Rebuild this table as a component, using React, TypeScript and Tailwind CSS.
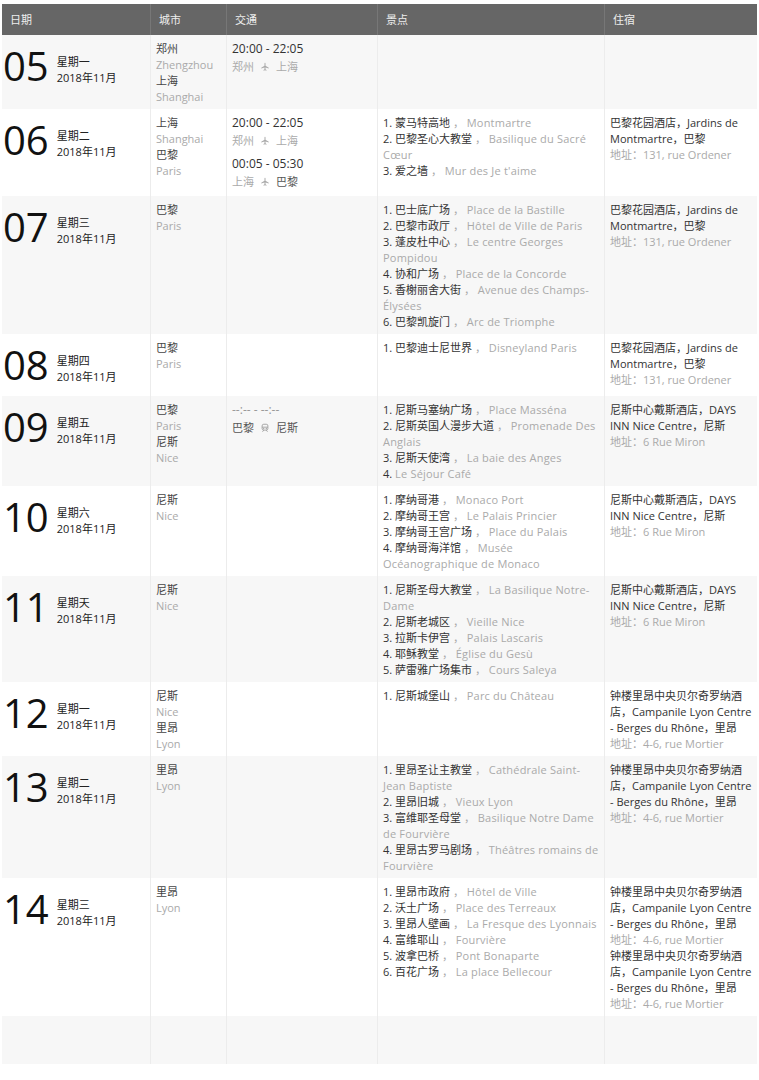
import React from "react";

type Trip = {
  time: string;
  from: string;
  to: string;
  mode: "plane" | "train";
  fromDark?: boolean;
  toDark?: boolean;
  timeGray?: boolean;
};

type Spot = { zh?: string; fr: string };

type Day = {
  day: string;
  week: string;
  cities: { zh: string; en: string }[];
  trips: Trip[];
  spots: Spot[];
  hotels: { name: string; addr: string }[];
};

const parisHotel = { name: "巴黎花园酒店，Jardins de Montmartre，巴黎", addr: "地址：131, rue Ordener" };
const niceHotel = { name: "尼斯中心戴斯酒店，DAYS INN Nice Centre，尼斯", addr: "地址：6 Rue Miron" };
const lyonHotel = {
  name: "钟楼里昂中央贝尔奇罗纳酒店，Campanile Lyon Centre - Berges du Rhône，里昂",
  addr: "地址：4-6, rue Mortier",
};

const days: Day[] = [
  {
    day: "05",
    week: "星期一",
    cities: [
      { zh: "郑州", en: "Zhengzhou" },
      { zh: "上海", en: "Shanghai" },
    ],
    trips: [{ time: "20:00 - 22:05", from: "郑州", to: "上海", mode: "plane" }],
    spots: [],
    hotels: [],
  },
  {
    day: "06",
    week: "星期二",
    cities: [
      { zh: "上海", en: "Shanghai" },
      { zh: "巴黎", en: "Paris" },
    ],
    trips: [
      { time: "20:00 - 22:05", from: "郑州", to: "上海", mode: "plane" },
      { time: "00:05 - 05:30", from: "上海", to: "巴黎", mode: "plane", toDark: true },
    ],
    spots: [
      { zh: "蒙马特高地", fr: "Montmartre" },
      { zh: "巴黎圣心大教堂", fr: "Basilique du Sacré Cœur" },
      { zh: "爱之墙", fr: "Mur des Je t'aime" },
    ],
    hotels: [parisHotel],
  },
  {
    day: "07",
    week: "星期三",
    cities: [{ zh: "巴黎", en: "Paris" }],
    trips: [],
    spots: [
      { zh: "巴士底广场", fr: "Place de la Bastille" },
      { zh: "巴黎市政厅", fr: "Hôtel de Ville de Paris" },
      { zh: "蓬皮杜中心", fr: "Le centre Georges Pompidou" },
      { zh: "协和广场", fr: "Place de la Concorde" },
      { zh: "香榭丽舍大街", fr: "Avenue des Champs-Élysées" },
      { zh: "巴黎凯旋门", fr: "Arc de Triomphe" },
    ],
    hotels: [parisHotel],
  },
  {
    day: "08",
    week: "星期四",
    cities: [{ zh: "巴黎", en: "Paris" }],
    trips: [],
    spots: [{ zh: "巴黎迪士尼世界", fr: "Disneyland Paris" }],
    hotels: [parisHotel],
  },
  {
    day: "09",
    week: "星期五",
    cities: [
      { zh: "巴黎", en: "Paris" },
      { zh: "尼斯", en: "Nice" },
    ],
    trips: [
      { time: "--:-- - --:--", from: "巴黎", to: "尼斯", mode: "train", fromDark: true, toDark: true, timeGray: true },
    ],
    spots: [
      { zh: "尼斯马塞纳广场", fr: "Place Masséna" },
      { zh: "尼斯英国人漫步大道", fr: "Promenade Des Anglais" },
      { zh: "尼斯天使湾", fr: "La baie des Anges" },
      { fr: "Le Séjour Café" },
    ],
    hotels: [niceHotel],
  },
  {
    day: "10",
    week: "星期六",
    cities: [{ zh: "尼斯", en: "Nice" }],
    trips: [],
    spots: [
      { zh: "摩纳哥港", fr: "Monaco Port" },
      { zh: "摩纳哥王宫", fr: "Le Palais Princier" },
      { zh: "摩纳哥王宫广场", fr: "Place du Palais" },
      { zh: "摩纳哥海洋馆", fr: "Musée Océanographique de Monaco" },
    ],
    hotels: [niceHotel],
  },
  {
    day: "11",
    week: "星期天",
    cities: [{ zh: "尼斯", en: "Nice" }],
    trips: [],
    spots: [
      { zh: "尼斯圣母大教堂", fr: "La Basilique Notre-Dame" },
      { zh: "尼斯老城区", fr: "Vieille Nice" },
      { zh: "拉斯卡伊宫", fr: "Palais Lascaris" },
      { zh: "耶稣教堂", fr: "Église du Gesù" },
      { zh: "萨雷雅广场集市", fr: "Cours Saleya" },
    ],
    hotels: [niceHotel],
  },
  {
    day: "12",
    week: "星期一",
    cities: [
      { zh: "尼斯", en: "Nice" },
      { zh: "里昂", en: "Lyon" },
    ],
    trips: [],
    spots: [{ zh: "尼斯城堡山", fr: "Parc du Château" }],
    hotels: [lyonHotel],
  },
  {
    day: "13",
    week: "星期二",
    cities: [{ zh: "里昂", en: "Lyon" }],
    trips: [],
    spots: [
      { zh: "里昂圣让主教堂", fr: "Cathédrale Saint-Jean Baptiste" },
      { zh: "里昂旧城", fr: "Vieux Lyon" },
      { zh: "富维耶圣母堂", fr: "Basilique Notre Dame de Fourvière" },
      { zh: "里昂古罗马剧场", fr: "Théâtres romains de Fourvière" },
    ],
    hotels: [lyonHotel],
  },
  {
    day: "14",
    week: "星期三",
    cities: [{ zh: "里昂", en: "Lyon" }],
    trips: [],
    spots: [
      { zh: "里昂市政府", fr: "Hôtel de Ville" },
      { zh: "沃土广场", fr: "Place des Terreaux" },
      { zh: "里昂人壁画", fr: "La Fresque des Lyonnais" },
      { zh: "富维耶山", fr: "Fourvière" },
      { zh: "波拿巴桥", fr: "Pont Bonaparte" },
      { zh: "百花广场", fr: "La place Bellecour" },
    ],
    hotels: [lyonHotel, lyonHotel],
  },
];

const Plane = () => (
  <svg viewBox="0 0 24 24" className="h-[10px] w-[10px] fill-[#aaa]">
    <path d="M12 2c.8 0 1.2.8 1.2 1.8V9l7.8 4.5v1.8L13.2 13v4.6l2.3 1.7V21L12 20l-3.5 1v-1.7l2.3-1.7V13L3 15.3v-1.8L10.8 9V3.8C10.8 2.8 11.2 2 12 2z" />
  </svg>
);

const Train = () => (
  <svg viewBox="0 0 24 24" className="h-[10px] w-[10px]" fill="none" stroke="#999" strokeWidth="2">
    <rect x="5" y="3" width="14" height="14" rx="4" />
    <path d="M5 10h14M9 17l-3 4M15 17l3 4" />
    <circle cx="9" cy="13.5" r="0.8" fill="#999" />
    <circle cx="15" cy="13.5" r="0.8" fill="#999" />
  </svg>
);

const cols = "grid grid-cols-[149px_76px_151px_227px_152px]";
const cell = "border-r border-[#ececec] pt-[6px] pb-[4px] px-[5px]";

const App = () => {
  return (
    <div className="min-h-[1080px] w-[759px] bg-white px-[2px] pt-[4px] font-['Open_Sans','Noto_Sans_CJK_SC',sans-serif] text-[11px] leading-[16px] text-[#333]">
      <div className={`${cols} h-[31px] bg-[#666] text-[#eee]`}>
        {["日期", "城市", "交通", "景点", "住宿"].map((h, i) => (
          <div key={h} className={`flex items-center px-[8px] ${i < 4 ? "border-r border-[#777]" : ""}`}>
            {h}
          </div>
        ))}
      </div>

      {days.map((d, idx) => (
        <div key={d.day} className={`${cols} ${idx % 2 === 0 ? "bg-[#f7f7f7]" : "bg-white"}`}>
          <div className="flex items-start border-r border-[#ececec] pl-[1px] pt-[11px] pb-[11px]">
            <div className="text-[40px] leading-[40px] text-[#111]">{d.day}</div>
            <div className="ml-[8px] mt-[8px] text-[#222]">
              <div>{d.week}</div>
              <div>2018年11月</div>
            </div>
          </div>

          <div className={cell}>
            {d.cities.map((c) => (
              <div key={c.zh}>
                <div className="text-[#444]">{c.zh}</div>
                <div className="text-[#aaa]">{c.en}</div>
              </div>
            ))}
          </div>

          <div className={cell}>
            <div className="flex flex-col gap-[5px]">
              {d.trips.map((t, i) => (
                <div key={i}>
                  <div className={`text-[12px] leading-[16px] ${t.timeGray ? "text-[#999]" : "text-[#333]"}`}>{t.time}</div>
                  <div className="flex h-[20px] items-center gap-[6px]">
                    <span className={t.fromDark ? "text-[#555]" : "text-[#aaa]"}>{t.from}</span>
                    {t.mode === "plane" ? <Plane /> : <Train />}
                    <span className={t.toDark ? "text-[#555]" : "text-[#aaa]"}>{t.to}</span>
                  </div>
                </div>
              ))}
            </div>
          </div>

          <div className={cell}>
            {d.spots.map((s, i) => (
              <div key={i}>
                <span className="text-[#333]">{i + 1}. </span>
                {s.zh && (
                  <>
                    <span className="text-[#333]">{s.zh}</span>
                    <span className="text-[#aaa]"> ， </span>
                  </>
                )}
                <span className="tracking-[0.2px] text-[#aaa]">{s.fr}</span>
              </div>
            ))}
          </div>

          <div className="pt-[6px] pb-[4px] px-[5px]">
            {d.hotels.map((h, i) => (
              <div key={i}>
                <div className="text-[#333]">{h.name}</div>
                <div className="text-[#aaa]">{h.addr}</div>
              </div>
            ))}
          </div>
        </div>
      ))}

      <div className={`${cols} h-[48px] bg-[#f7f7f7]`}>
        <div className="border-r border-[#ececec]" />
        <div className="border-r border-[#ececec]" />
        <div className="border-r border-[#ececec]" />
        <div className="border-r border-[#ececec]" />
        <div />
      </div>
    </div>
  );
};

export default App;
